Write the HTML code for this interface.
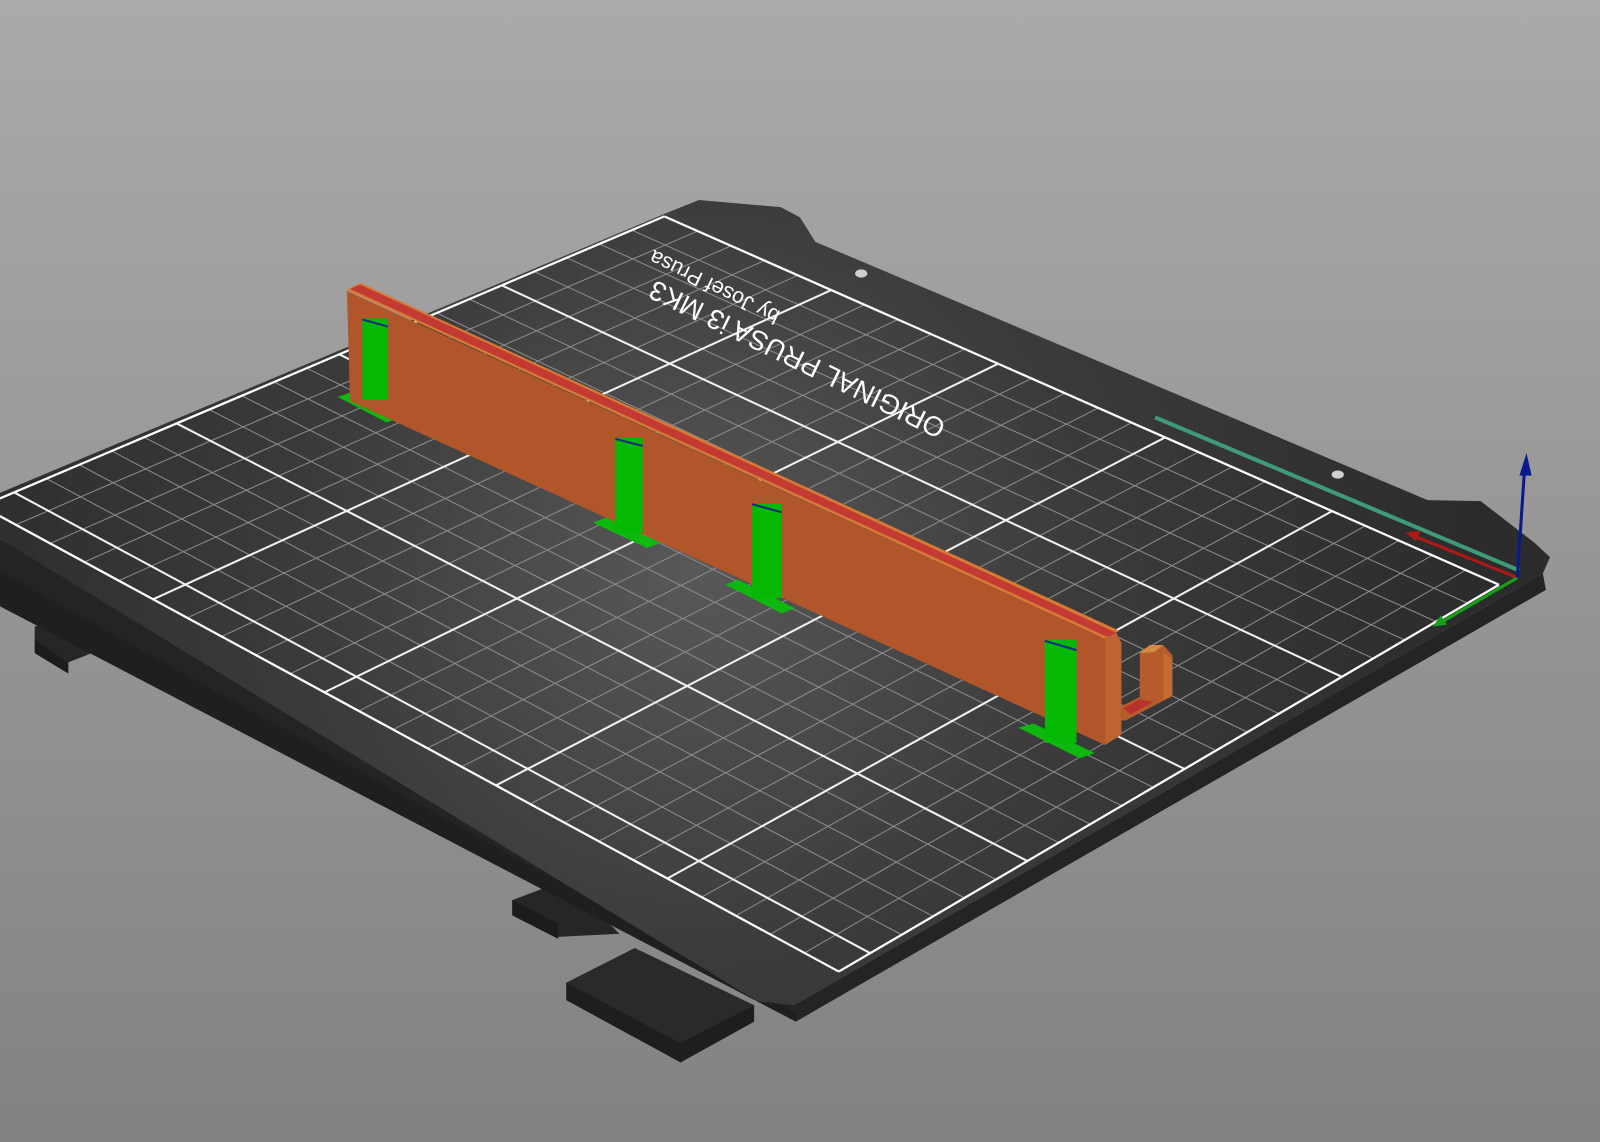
<!DOCTYPE html>
<html><head><meta charset="utf-8"><style>
html,body{margin:0;padding:0;width:1600px;height:1142px;overflow:hidden;background:#999}
svg{display:block}
</style></head><body>
<svg id="s" width="1600" height="1142" viewBox="0 0 1568 1119" preserveAspectRatio="none" xmlns="http://www.w3.org/2000/svg">
<defs>
<linearGradient id="bg" x1="0" y1="0" x2="0" y2="1">
<stop offset="0" stop-color="#aaaaaa"/><stop offset="1" stop-color="#828282"/>
</linearGradient>
<radialGradient id="pl" cx="680" cy="560" r="760" gradientUnits="userSpaceOnUse">
<stop offset="0" stop-color="#585858"/><stop offset="0.5" stop-color="#3b3b3b"/><stop offset="1" stop-color="#2c2c2c"/>
</radialGradient>
</defs>
<rect width="1568" height="1119" fill="url(#bg)"/>
<!-- tabs -->
<polygon points="34,614 82,598 115,630 67,649 34,630" fill="#262626"/>
<polygon points="34,627 67,649 67,660 34,640" fill="#1c1c1c"/>
<polygon points="502,882 555,862 607,915 547,918 502,895" fill="#262626"/>
<polygon points="502,882 502,897 547,920 547,905" fill="#1c1c1c"/>
<polygon points="555,963 622,929 739,985 739,1001 667,1041 555,980" fill="#262626"/>
<polygon points="555,963 667,1022 739,985 739,1001 667,1041 555,980" fill="#1e1e1e"/>
<polygon points="555,963 622,929 739,985 667,1022" fill="#2a2a2a"/>
<!-- plate side -->
<polygon points="0,528 778,985 1512,562 1515,578 780,1001 0,594" fill="#242424"/>
<polygon points="0,560 780,993 780,1001 0,594" fill="#1f1f1f"/>
<!-- plate top -->
<polygon points="0,483 655,208 685,196 765,203 784,213 799,237 1399,490 1451,491 1504,532 1519,546 1512,562 778,985 742,981 0,528" fill="url(#pl)"/>
<ellipse cx="844" cy="268" rx="6" ry="4" fill="#cfcfcf"/>
<ellipse cx="1311" cy="465" rx="6" ry="4" fill="#cfcfcf"/>
<g id="grid"></g>
<g transform="translate(642,274) rotate(206)" fill="#ffffff" font-family="Liberation Sans, sans-serif" text-anchor="end">
<text x="0" y="0" font-size="27">ORIGINAL PRUSA i3 MK3</text>
<text x="14" y="26" font-size="21">by Josef Prusa</text>
</g>
<!-- axes -->
<line x1="1132" y1="409" x2="1489" y2="559" stroke="#3f9a78" stroke-width="4"/>
<line x1="1487" y1="566" x2="1385" y2="525" stroke="#b01818" stroke-width="3"/>
<polygon points="1377,522 1392,520 1388,530" fill="#b01818"/>
<line x1="1487" y1="566" x2="1412" y2="610" stroke="#16a016" stroke-width="3"/>
<polygon points="1404,614 1412,603 1418,612" fill="#16a016"/>
<line x1="1487" y1="566" x2="1494" y2="460" stroke="#0a1a8c" stroke-width="3"/>
<polygon points="1496,444 1489,466 1501,466" fill="#0a1a8c"/>
<!-- supports bases behind wall -->
<g fill="#0fb80f">
<polygon points="331,389 345,384 392,409 379,414"/>
<polygon points="581,512 595,507 647,532 634,537"/>
<polygon points="711,573 723,568 779,596 766,601"/>
<polygon points="998,713 1013,709 1073,738 1058,743"/>
</g>
<!-- wall -->
<polygon points="340,284 353,277 1097,618 1083,626" fill="#d77a35"/>
<polygon points="343,283 353,279 1094,620 1085,624" fill="#c23a32"/>
<polygon points="340,285 1083,626 1083,730 343,393" fill="#b0562a"/>
<polygon points="1083,626 1094,620 1099,630 1099,720 1083,730" fill="#bf6430"/>
<!-- hook -->
<polygon points="1099,692 1117,683 1117,640 1127,632 1140,632 1149,642 1149,682 1103,706 1099,706" fill="#b65b2b"/>
<polygon points="1140,640 1149,645 1149,682 1140,686" fill="#c46a32"/>
<polygon points="1117,640 1127,632 1140,632 1131,639" fill="#d98a3e"/>
<polygon points="1101,694 1117,685 1130,688 1108,700" fill="#b7322e"/>
<!-- support bars -->
<g fill="#04b804">
<rect x="355" y="312" width="25" height="80"/>
<rect x="603" y="429" width="27" height="93"/>
<rect x="737" y="493" width="29" height="93"/>
<rect x="1024" y="627" width="31" height="101"/>
</g>
<g stroke="#1a2a80" stroke-width="2">
<line x1="355" y1="313" x2="380" y2="320"/>
<line x1="603" y1="430" x2="630" y2="437"/>
<line x1="737" y1="494" x2="766" y2="502"/>
<line x1="1024" y1="628" x2="1055" y2="637"/>
</g>
</svg>
<script>
(function(){
var R=[1469,573],T=[651,212],B=[822,952],L=[-18,496];
function P(u,v){return [R[0]*(1-u)*(1-v)+T[0]*u*(1-v)+B[0]*(1-u)*v+L[0]*u*v,
R[1]*(1-u)*(1-v)+T[1]*u*(1-v)+B[1]*(1-u)*v+L[1]*u*v];}
var g=document.getElementById('grid'),h='';
function ln(a,b,c,w){h+='<line x1="'+a[0].toFixed(1)+'" y1="'+a[1].toFixed(1)+'" x2="'+b[0].toFixed(1)+'" y2="'+b[1].toFixed(1)+'" stroke="'+c+'" stroke-width="'+w+'"/>';}
for(var i=1;i<25;i++){var u=i/25;if(i%5)ln(P(u,0),P(u,1),'#8d8d8d',1);}
for(var j=1;j<21;j++){var v=j/21;if(j%5)ln(P(0,v),P(1,v),'#8d8d8d',1);}
for(var i=5;i<25;i+=5){var u=i/25;ln(P(u,0),P(u,1),'#f2f2f2',2);}
for(var j=5;j<21;j+=5){var v=j/21;ln(P(0,v),P(1,v),'#f2f2f2',2);}
ln(R,T,'#ffffff',2.2);ln(T,L,'#ffffff',2.2);ln(L,B,'#ffffff',2.2);ln(B,R,'#ffffff',2.2);
g.innerHTML=h;
})();
</script>
</body></html>
